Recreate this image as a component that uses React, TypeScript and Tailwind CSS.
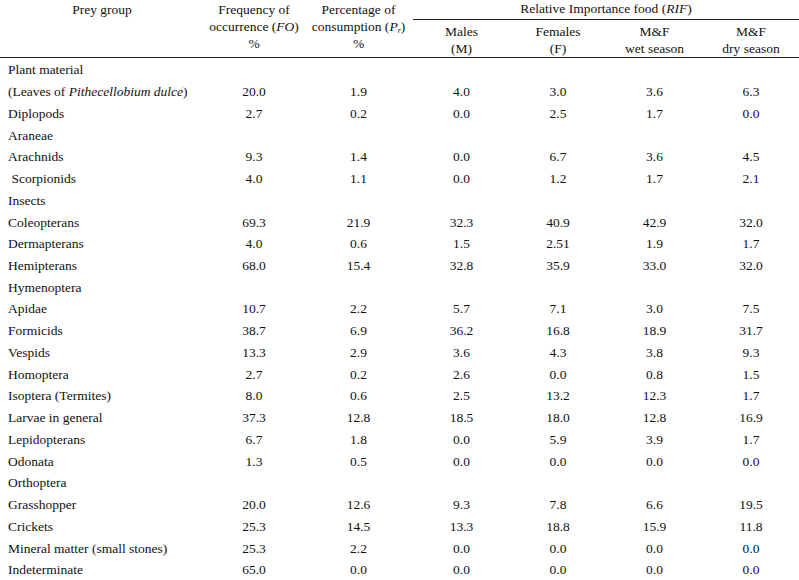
const rows: { name: React.ReactNode; vals?: string[]; indent?: boolean }[] = [
  { name: "Plant material" },
  {
    name: (
      <>
        (Leaves of <i>Pithecellobium dulce</i>)
      </>
    ),
    vals: ["20.0", "1.9", "4.0", "3.0", "3.6", "6.3"],
  },
  { name: "Diplopods", vals: ["2.7", "0.2", "0.0", "2.5", "1.7", "0.0"] },
  { name: "Araneae" },
  { name: "Arachnids", vals: ["9.3", "1.4", "0.0", "6.7", "3.6", "4.5"] },
  { name: "Scorpionids", vals: ["4.0", "1.1", "0.0", "1.2", "1.7", "2.1"], indent: true },
  { name: "Insects" },
  { name: "Coleopterans", vals: ["69.3", "21.9", "32.3", "40.9", "42.9", "32.0"] },
  { name: "Dermapterans", vals: ["4.0", "0.6", "1.5", "2.51", "1.9", "1.7"] },
  { name: "Hemipterans", vals: ["68.0", "15.4", "32.8", "35.9", "33.0", "32.0"] },
  { name: "Hymenoptera" },
  { name: "Apidae", vals: ["10.7", "2.2", "5.7", "7.1", "3.0", "7.5"] },
  { name: "Formicids", vals: ["38.7", "6.9", "36.2", "16.8", "18.9", "31.7"] },
  { name: "Vespids", vals: ["13.3", "2.9", "3.6", "4.3", "3.8", "9.3"] },
  { name: "Homoptera", vals: ["2.7", "0.2", "2.6", "0.0", "0.8", "1.5"] },
  { name: "Isoptera (Termites)", vals: ["8.0", "0.6", "2.5", "13.2", "12.3", "1.7"] },
  { name: "Larvae in general", vals: ["37.3", "12.8", "18.5", "18.0", "12.8", "16.9"] },
  { name: "Lepidopterans", vals: ["6.7", "1.8", "0.0", "5.9", "3.9", "1.7"] },
  { name: "Odonata", vals: ["1.3", "0.5", "0.0", "0.0", "0.0", "0.0"] },
  { name: "Orthoptera" },
  { name: "Grasshopper", vals: ["20.0", "12.6", "9.3", "7.8", "6.6", "19.5"] },
  { name: "Crickets", vals: ["25.3", "14.5", "13.3", "18.8", "15.9", "11.8"] },
  { name: "Mineral matter (small stones)", vals: ["25.3", "2.2", "0.0", "0.0", "0.0", "0.0"] },
  { name: "Indeterminate", vals: ["65.0", "0.0", "0.0", "0.0", "0.0", "0.0"] },
];

const cols = "grid grid-cols-[204px_100px_109px_97px_96px_97px_96px]";

export default function App() {
  return (
    <div className="w-[799px] h-[580px] bg-white text-[#111] text-[13.5px] overflow-hidden font-['Liberation_Serif','Times_New_Roman',serif]">
      {/* Header */}
      <div className={`${cols} border-b border-[#222] leading-[17px] text-center`}>
        <div className="row-span-2 pt-[1px]">Prey group</div>
        <div className="row-span-2 pt-[1px]">
          Frequency of
          <br />
          occurrence (<i>FO</i>)
          <br />%
        </div>
        <div className="row-span-2 pt-[1px]">
          Percentage of
          <br />
          consumption (<i>P</i>
          <sub className="text-[8px] italic">r</sub>)
          <br />%
        </div>
        <div className="col-span-4 h-[20px] border-b border-[#222]">
          Relative Importance food (<i>RIF</i>)
        </div>
        <div className="h-[37px] pt-[2.5px]">
          Males
          <br />
          (M)
        </div>
        <div className="h-[37px] pt-[2.5px]">
          Females
          <br />
          (F)
        </div>
        <div className="h-[37px] pt-[2.5px]">
          M&amp;F
          <br />
          wet season
        </div>
        <div className="h-[37px] pt-[2.5px]">
          M&amp;F
          <br />
          dry season
        </div>
      </div>

      {/* Body */}
      <div className="pt-[1px]">
        {rows.map((r, i) => (
          <div key={i} className={`${cols} h-[21.74px] items-center leading-[17px]`}>
            <div className={r.indent ? "pl-[11.5px] whitespace-nowrap" : "pl-[8px] whitespace-nowrap"}>
              {r.name}
            </div>
            {(r.vals ?? ["", "", "", "", "", ""]).map((v, j) => (
              <div key={j} className="text-center">
                {v}
              </div>
            ))}
          </div>
        ))}
      </div>
    </div>
  );
}
